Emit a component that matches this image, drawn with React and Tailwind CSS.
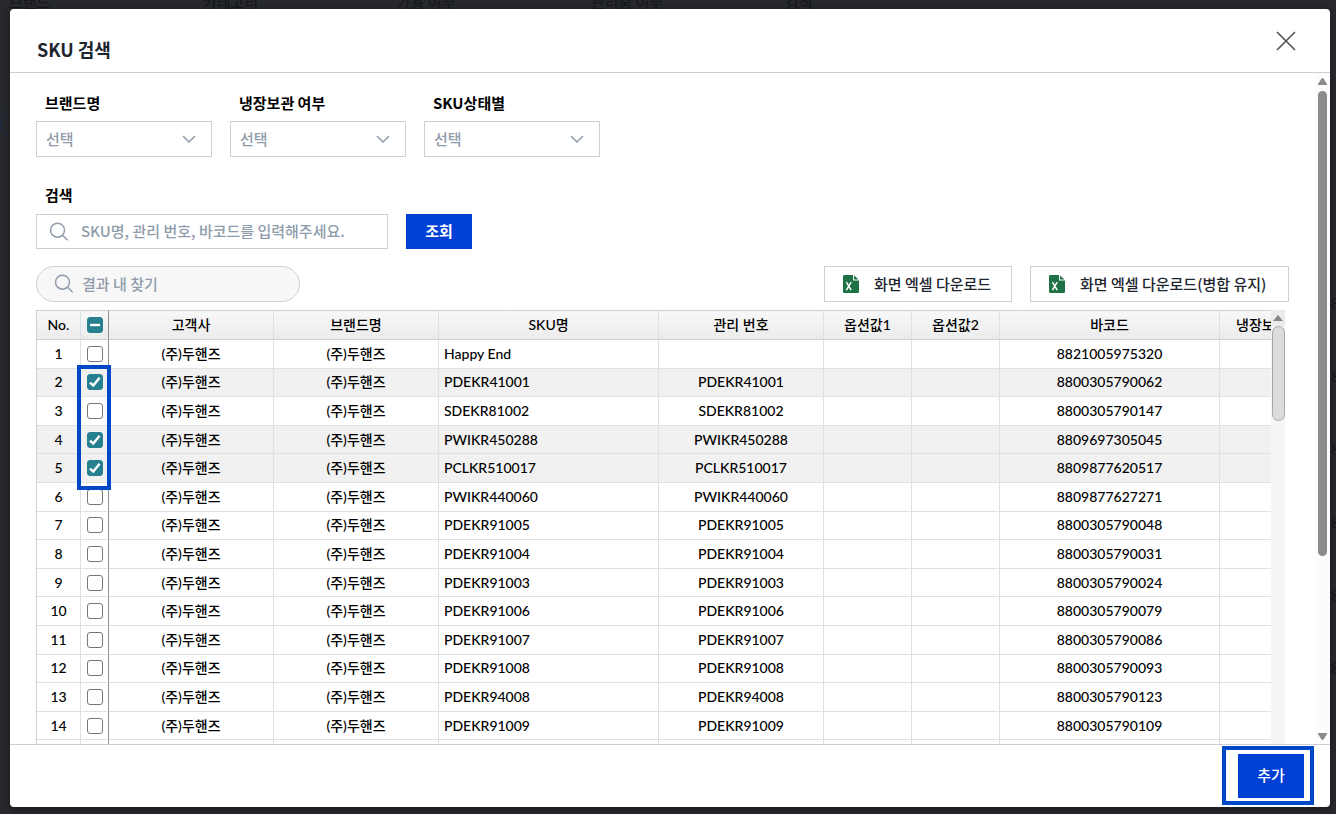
import { useState } from 'react';

const filters = [
  { id: 'brand', label: '브랜드명' },
  { id: 'cold', label: '냉장보관 여부' },
  { id: 'status', label: 'SKU상태별' },
];

const backdropLabels = ['브랜드', '카테고리', '가용 여부', '관리중 여부', '검색'];
const backdropCodes = ['88', '88', '88', '88', '88', '88'];

const rows = [
  { no: 1, sku: 'Happy End', code: '', barcode: '8821005975320' },
  { no: 2, sku: 'PDEKR41001', code: 'PDEKR41001', barcode: '8800305790062' },
  { no: 3, sku: 'SDEKR81002', code: 'SDEKR81002', barcode: '8800305790147' },
  { no: 4, sku: 'PWIKR450288', code: 'PWIKR450288', barcode: '8809697305045' },
  { no: 5, sku: 'PCLKR510017', code: 'PCLKR510017', barcode: '8809877620517' },
  { no: 6, sku: 'PWIKR440060', code: 'PWIKR440060', barcode: '8809877627271' },
  { no: 7, sku: 'PDEKR91005', code: 'PDEKR91005', barcode: '8800305790048' },
  { no: 8, sku: 'PDEKR91004', code: 'PDEKR91004', barcode: '8800305790031' },
  { no: 9, sku: 'PDEKR91003', code: 'PDEKR91003', barcode: '8800305790024' },
  { no: 10, sku: 'PDEKR91006', code: 'PDEKR91006', barcode: '8800305790079' },
  { no: 11, sku: 'PDEKR91007', code: 'PDEKR91007', barcode: '8800305790086' },
  { no: 12, sku: 'PDEKR91008', code: 'PDEKR91008', barcode: '8800305790093' },
  { no: 13, sku: 'PDEKR94008', code: 'PDEKR94008', barcode: '8800305790123' },
  { no: 14, sku: 'PDEKR91009', code: 'PDEKR91009', barcode: '8800305790109' },
];

const cell = 'border-r border-b border-[#dde0e6] p-0 text-center';
const headCell = 'border-r border-r-[#dde0e6] border-y border-y-[#cfcfd1] p-0 text-center font-medium';
const excelButton = 'flex h-9 items-center gap-[15px] border border-[#cfcfd1] bg-white pl-[18px] text-[15px] font-medium text-[#1e252e]';

function SearchIcon() {
  return (
    <svg className="size-5 shrink-0" viewBox="0 0 20 20" fill="none" stroke="#8f9cab" strokeWidth="1.5" strokeLinecap="round">
      <circle cx="8.5" cy="8.2" r="7" />
      <path d="M13.5 13.2 18.2 17.8" />
    </svg>
  );
}

function ExcelIcon() {
  return (
    <svg className="h-[18px] w-4 shrink-0" viewBox="0 0 16 18">
      <path d="M1.2 0H10V5.5H16V16.8Q16 18 14.8 18H1.2Q0 18 0 16.8V1.2Q0 0 1.2 0Z" fill="#1f7246" />
      <path d="M11 0.4 15.6 4.6H11Z" fill="#1f7246" />
      <path d="M3.4 7.2 8.2 15.2M8.2 7.2 3.4 15.2" stroke="#fff" strokeWidth="1.5" fill="none" />
    </svg>
  );
}

function CheckBox({ checked, indeterminate, label, onChange }) {
  return (
    <span className="relative block size-4">
      <input
        type="checkbox"
        aria-label={label}
        checked={checked}
        onChange={onChange}
        className="block size-4 appearance-none rounded-[3px] border border-[#767676] bg-white checked:border-[#26808f] checked:bg-[#26808f]"
      />
      {checked && (
        <svg className="pointer-events-none absolute inset-0 size-4" viewBox="0 0 16 16" fill="none" stroke="#fff" strokeWidth="2.4">
          {indeterminate ? <path d="M3 8H13" /> : <path d="M3 8.6 6.3 11.6 12.6 3.8" />}
        </svg>
      )}
    </span>
  );
}

export default function App() {
  const [selected, setSelected] = useState([2, 4, 5]);

  const toggle = (no) => {
    setSelected(selected.includes(no) ? selected.filter((n) => n !== no) : [...selected, no]);
  };

  const toggleAll = () => {
    setSelected(selected.length ? [] : rows.map((row) => row.no));
  };

  return (
    <div className="relative h-screen overflow-hidden bg-[#27292d] pt-[9px] pr-[6px] pb-[7px] pl-[10px] font-['Noto_Sans_CJK_KR',sans-serif]">
      {/* Dimmed page behind the dialog */}
      <div className="absolute top-[-8px] left-[9px] flex text-[15px] leading-5 font-medium text-[#17191c]" aria-hidden="true">
        {backdropLabels.map((label) => (
          <span key={label} className="w-[194px]">{label}</span>
        ))}
      </div>
      <div className="absolute top-[107px] left-0 size-8 rounded-full border border-[#1d2b45]"></div>
      <div className="absolute top-[293px] left-[1331px] flex flex-col gap-[53px] text-[15px] leading-5 text-[#15171a]" aria-hidden="true">
        {backdropCodes.map((code, i) => (
          <span key={i}>{code}</span>
        ))}
      </div>

      {/* Dialog */}
      <div role="dialog" aria-label="SKU 검색" className="relative flex h-full flex-col overflow-hidden rounded-[4px] bg-white shadow-[0_2px_10px_rgba(0,0,0,0.4)]">
        <header className="flex h-16 shrink-0 items-center justify-between border-b border-[#cfcfd1] pr-[34px] pl-[27px]">
          <h1 className="pt-4 text-lg font-bold text-[#1e252e]">SKU 검색</h1>
          <button type="button" aria-label="닫기" className="size-5">
            <svg viewBox="0 0 20 20" fill="none" stroke="#555" strokeWidth="1.7">
              <path d="M1 1 19 19M19 1 1 19" />
            </svg>
          </button>
        </header>

        <div className="flex min-h-0 flex-1">
          <main className="min-w-0 flex-1 overflow-hidden px-[26px]">
            <div className="flex gap-[18px] pt-[18px]">
              {filters.map((filter) => (
                <div key={filter.id} className="w-44">
                  <label htmlFor={filter.id} className="block h-[30px] pl-[9px] text-[15px] leading-6 font-bold text-black">
                    {filter.label}
                  </label>
                  <div className="relative">
                    <select id={filter.id} className="block h-9 w-full appearance-none border border-[#cfcfd1] bg-white px-[9px] text-[15px] font-medium text-[#8f9cab]">
                      <option>선택</option>
                    </select>
                    <svg className="pointer-events-none absolute top-[14px] right-4 h-2 w-[14px]" viewBox="0 0 14 8" fill="none" stroke="#8f9cab" strokeWidth="1.5">
                      <path d="M1 1 7 7 13 1" />
                    </svg>
                  </div>
                </div>
              ))}
            </div>

            <div className="pt-[26px]">
              <label htmlFor="keyword" className="block h-[31px] pl-[9px] text-[15px] leading-6 font-bold text-black">
                검색
              </label>
              <div className="flex gap-[18px]">
                <div className="flex h-[35px] w-88 items-center gap-3 border border-[#cfcfd1] pl-3">
                  <SearchIcon />
                  <input
                    id="keyword"
                    type="text"
                    placeholder="SKU명, 관리 번호, 바코드를 입력해주세요."
                    className="min-w-0 flex-1 text-[15px] font-medium outline-none placeholder:text-[#8f9cab]"
                  />
                </div>
                <button type="button" className="h-[35px] w-[66px] bg-[#0040d4] text-[15px] font-bold text-white">
                  조회
                </button>
              </div>
            </div>

            <div className="flex items-center pt-[17px] pb-2">
              <div className="flex h-9 w-66 items-center gap-2 rounded-full border border-[#cfcfd1] bg-[#f7f7f7] pl-[17px]">
                <SearchIcon />
                <input
                  type="text"
                  aria-label="결과 내 찾기"
                  placeholder="결과 내 찾기"
                  className="min-w-0 flex-1 text-[15px] font-medium outline-none placeholder:text-[#8f9cab]"
                />
              </div>
              <div className="ml-auto flex gap-[18px]">
                <button type="button" className={`${excelButton} w-47`}>
                  <ExcelIcon />
                  화면 엑셀 다운로드
                </button>
                <button type="button" className={`${excelButton} w-[259px]`}>
                  <ExcelIcon />
                  화면 엑셀 다운로드(병합 유지)
                </button>
              </div>
            </div>

            {/* Result grid */}
            <div className="relative mr-1 flex">
              <div className="min-w-0 flex-1 overflow-hidden">
                <table className="h-[459px] w-[1312px] table-fixed border-separate border-spacing-0 border-l border-[#cfcfd1] font-['Lato','Noto_Sans_CJK_KR',sans-serif] text-sm leading-5 font-medium text-black">
                  <colgroup>
                    <col className="w-11" />
                    <col className="w-7" />
                    <col className="w-[165px]" />
                    <col className="w-[165px]" />
                    <col className="w-[220px]" />
                    <col className="w-[165px]" />
                    <col className="w-[88px]" />
                    <col className="w-[88px]" />
                    <col className="w-[220px]" />
                    <col />
                  </colgroup>
                  <thead className="bg-linear-to-b from-[#f8f8f8] to-[#ebebeb]">
                    <tr className="h-[30px]">
                      <th className={headCell}>No.</th>
                      <th className="border-y border-r border-y-[#cfcfd1] border-r-[#8f8f8f] p-0 pl-[6px]">
                        <CheckBox label="전체 선택" checked={selected.length > 0} indeterminate={selected.length < rows.length} onChange={toggleAll} />
                      </th>
                      <th className={headCell}>고객사</th>
                      <th className={headCell}>브랜드명</th>
                      <th className={headCell}>SKU명</th>
                      <th className={headCell}>관리 번호</th>
                      <th className={headCell}>옵션값1</th>
                      <th className={headCell}>옵션값2</th>
                      <th className={headCell}>바코드</th>
                      <th className="border-y border-[#cfcfd1] p-0 pl-4 text-left font-medium">냉장보관 여부</th>
                    </tr>
                  </thead>
                  <tbody>
                    {rows.map((row) => (
                      <tr key={row.no} className={selected.includes(row.no) ? 'h-7 bg-[#f1f1f1]' : 'h-7 bg-white'}>
                        <td className={cell}>{row.no}</td>
                        <td className="border-r border-b border-r-[#8f8f8f] border-b-[#dde0e6] p-0 pl-[6px]">
                          <CheckBox label={`${row.no}번 선택`} checked={selected.includes(row.no)} onChange={() => toggle(row.no)} />
                        </td>
                        <td className={cell}>(주)두핸즈</td>
                        <td className={cell}>(주)두핸즈</td>
                        <td className="border-r border-b border-[#dde0e6] p-0 pl-[5px] text-left">{row.sku}</td>
                        <td className={cell}>{row.code}</td>
                        <td className={cell}></td>
                        <td className={cell}></td>
                        <td className={cell}>{row.barcode}</td>
                        <td className={cell}></td>
                      </tr>
                    ))}
                    <tr className="h-7">
                      <td className={cell}></td>
                      <td className="border-r border-b border-r-[#8f8f8f] border-b-[#dde0e6]"></td>
                      <td className={cell}></td>
                      <td className={cell}></td>
                      <td className={cell}></td>
                      <td className={cell}></td>
                      <td className={cell}></td>
                      <td className={cell}></td>
                      <td className={cell}></td>
                      <td className={cell}></td>
                    </tr>
                  </tbody>
                </table>
              </div>
              <div className="flex w-[14px] shrink-0 flex-col items-center bg-[#f5f5f5]">
                <span className="flex h-4 w-full items-center justify-center bg-[#ebebeb]">
                  <svg className="h-[6px] w-[10px]" viewBox="0 0 10 6" fill="#858585">
                    <path d="M5 0 10 6H0Z" />
                  </svg>
                </span>
                <span className="h-[95px] w-[13px] rounded-full border border-[#a8a8a8] bg-[#dcdcdc]"></span>
              </div>
              {/* Highlight around the picked rows */}
              <div className="pointer-events-none absolute top-[55px] left-[41px] h-[125px] w-[34px] border-4 border-[#0049c6]"></div>
            </div>
          </main>

          {/* Dialog scrollbar */}
          <div className="flex w-[15px] shrink-0 flex-col items-center bg-[#fcfcfc] pt-[5px] pb-1">
            <svg className="h-[7px] w-[9px] shrink-0" viewBox="0 0 9 7" fill="#8b8b8b">
              <path d="M4.5 0Q5.2 0 5.8 1L9 6V7H0V6L3.2 1Q3.8 0 4.5 0Z" />
            </svg>
            <div className="flex w-[9px] flex-1 flex-col pt-[6px]">
              <span className="h-29/40 rounded-full bg-[#8b8b8b]"></span>
            </div>
            <svg className="h-[7px] w-[9px] shrink-0" viewBox="0 0 9 7" fill="#8b8b8b">
              <path d="M4.5 7Q5.2 7 5.8 6L9 1V0H0V1L3.2 6Q3.8 7 4.5 7Z" />
            </svg>
          </div>
        </div>

        <footer className="flex h-[63px] shrink-0 items-start justify-end border-t border-[#cfcfd1] pt-px pr-4">
          <div className="flex h-[59px] w-[92px] items-center justify-end border-4 border-[#0049c6] pr-[6px]">
            <button type="button" className="h-11 w-[66px] bg-[#0040d4] text-[15px] font-medium text-white">
              추가
            </button>
          </div>
        </footer>
      </div>
    </div>
  );
}
